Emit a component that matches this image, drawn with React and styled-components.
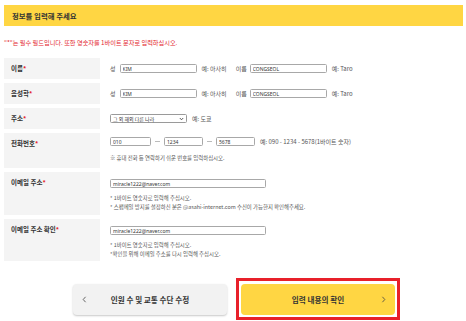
import React from 'react'
import styled, { createGlobalStyle } from 'styled-components'

const GlobalStyle = createGlobalStyle`
    html, body {
        margin: 0;
        padding: 0;
        background: #ffffff;
    }
    body {
        font-family: "Noto Sans CJK KR", "Noto Sans", sans-serif;
        color: #333333;
    }
`

const Container = styled.div`
    width: 466px;
    padding: 5px 3px 0px 4px;
    box-sizing: border-box;
`

const Header = styled.div`
    height: 21px;
    background-color: #ffd643;
    display: flex;
    align-items: center;
    padding-left: 8px;
    font-size: 7.4px;
    font-weight: 700;
    color: #333333;
`

const Notice = styled.p`
    margin: 12px 0px 11px 0px;
    font-size: 6.2px;
    line-height: 9px;
    color: #e3262e;
`

const Row = styled.div`
    display: grid;
    grid-template-columns: 96px 1fr;
    column-gap: 10px;
    min-height: ${props => props.$height}px;
    margin-bottom: 4px;
`

const Label = styled.div`
    background-color: #f4f4f4;
    padding: ${props => props.$multi ? '6px 7px 0px 7px' : '0px 7px'};
    display: flex;
    align-items: ${props => props.$multi ? 'flex-start' : 'center'};
    font-size: 6.5px;
    line-height: 9px;
    font-weight: 700;
    color: #333333;

    span {
        color: #e3262e;
    }
`

const Field = styled.div`
    display: flex;
    flex-direction: column;
    justify-content: ${props => props.$multi ? 'flex-start' : 'center'};
    padding-top: ${props => props.$top || 0}px;
`

const Line = styled.div`
    display: flex;
    align-items: center;
`

const Small = styled.span`
    font-size: 6px;
    color: #555555;
    margin-left: ${props => props.$left || 0}px;
    margin-right: ${props => props.$right || 0}px;
    white-space: nowrap;
`

const Input = styled.input`
    width: ${props => props.$width}px;
    height: 9px;
    box-sizing: border-box;
    border: 1px solid #a8a8a8;
    border-radius: 1.5px;
    padding: 0px 2px;
    margin: 0px;
    font-family: "Noto Sans", "Noto Sans CJK KR", sans-serif;
    font-size: 5px;
    color: #333333;
    background: #ffffff;
    outline: none;
`

const Select = styled.div`
    width: 77px;
    height: 9px;
    box-sizing: border-box;
    border: 1px solid #9a9a9a;
    border-radius: 1.5px;
    padding: 0px 2px;
    display: flex;
    align-items: center;
    justify-content: space-between;
    font-size: 5px;
    color: #333333;
`

const Dash = styled.span`
    width: 5px;
    height: 1px;
    background-color: #bbbbbb;
    margin: 0px 4px;
`

const Hints = styled.div`
    margin-top: ${props => props.$gap}px;
    font-size: 5.4px;
    line-height: 9px;
    color: #555555;
`

const ButtonRow = styled.div`
    display: flex;
    justify-content: center;
    align-items: center;
    gap: 9px;
    margin-top: 17px;
    padding-left: 6px;
`

const BackButton = styled.div`
    position: relative;
    width: 154px;
    height: 31px;
    border-radius: 4px;
    background-color: #f2f2f2;
    box-shadow: 0px 1px 2px rgba(0, 0, 0, 0.22);
    display: flex;
    align-items: center;
    justify-content: center;
    font-size: 7.6px;
    font-weight: 700;
    color: #333333;
`

const Highlight = styled.div`
    border: 3px solid #e8202a;
    padding: 3px 2px 2px 2px;
`

const NextButton = styled.div`
    position: relative;
    width: 154px;
    height: 31px;
    border-radius: 4px;
    background-color: #ffd643;
    display: flex;
    align-items: center;
    justify-content: center;
    font-size: 7.6px;
    font-weight: 700;
    color: #333333;
`

const Arrow = styled.svg`
    position: absolute;
    top: 12px;
    ${props => props.$side}: 9px;
    width: 5px;
    height: 7px;
`

const Chevron = ({ dir }) => (
    <Arrow $side={dir === 'left' ? 'left' : 'right'} viewBox="0 0 5 7">
        <path
            d={dir === 'left' ? 'M3.6 0.8 L1.2 3.5 L3.6 6.2' : 'M1.4 0.8 L3.8 3.5 L1.4 6.2'}
            fill="none"
            stroke="#444"
            strokeWidth="0.8"
        />
    </Arrow>
)

const App = () => {
  return (
    <Container>
        <GlobalStyle />
        <Header>정보를 입력해 주세요</Header>
        <Notice>"*"는 필수 필드입니다. 또한 영숫자를 1바이트 문자로 입력하십시오.</Notice>

        <Row $height={21}>
            <Label>이름<span>*</span></Label>
            <Field>
                <Line>
                    <Small $right={4}>성</Small>
                    <Input $width={77} value="KIM" readOnly />
                    <Small $left={5}>예: 아사히</Small>
                    <Small $left={9} $right={3}>이름</Small>
                    <Input $width={77} value="CONGSEOL" readOnly />
                    <Small $left={5}>예: Taro</Small>
                </Line>
            </Field>
        </Row>

        <Row $height={21}>
            <Label>음성학<span>*</span></Label>
            <Field>
                <Line>
                    <Small $right={4}>성</Small>
                    <Input $width={77} value="KIM" readOnly />
                    <Small $left={5}>예: 아사히</Small>
                    <Small $left={9} $right={3}>이름</Small>
                    <Input $width={77} value="CONGSEOL" readOnly />
                    <Small $left={5}>예: Taro</Small>
                </Line>
            </Field>
        </Row>

        <Row $height={21}>
            <Label>주소<span>*</span></Label>
            <Field>
                <Line>
                    <Select>
                        그 외 해외 다른 나라
                        <svg width="5" height="4" viewBox="0 0 5 4">
                            <path d="M0.8 1 L2.5 2.8 L4.2 1" fill="none" stroke="#333" strokeWidth="0.8" />
                        </svg>
                    </Select>
                    <Small $left={5}>예: 도쿄</Small>
                </Line>
            </Field>
        </Row>

        <Row $height={35}>
            <Label $multi>전화번호<span>*</span></Label>
            <Field $multi $top={4}>
                <Line>
                    <Input $width={41} value="010" readOnly />
                    <Dash />
                    <Input $width={39} value="1234" readOnly />
                    <Dash />
                    <Input $width={39} value="5678" readOnly />
                    <Small $left={5}>예: 090 - 1234 - 5678(1바이트 숫자)</Small>
                </Line>
                <Hints $gap={8}>※ 휴대 전화 등 연락하기 쉬운 번호를 입력하십시오.</Hints>
            </Field>
        </Row>

        <Row $height={43}>
            <Label $multi>이메일 주소<span>*</span></Label>
            <Field $multi $top={7}>
                <Line>
                    <Input $width={156} value="miracle1222@naver.com" readOnly />
                </Line>
                <Hints $gap={6}>
                    * 1바이트 영숫자로 입력해 주십시오.<br />
                    * 스팸메일 방지를 설정하신 분은 @asahi-internet.com 수신이 가능한지 확인해주세요.
                </Hints>
            </Field>
        </Row>

        <Row $height={42}>
            <Label $multi>이메일 주소 확인<span>*</span></Label>
            <Field $multi $top={7}>
                <Line>
                    <Input $width={156} value="miracle1222@naver.com" readOnly />
                </Line>
                <Hints $gap={6}>
                    * 1바이트 영숫자로 입력해 주십시오.<br />
                    *확인을 위해 이메일 주소를 다시 입력해 주십시오.
                </Hints>
            </Field>
        </Row>

        <ButtonRow>
            <BackButton>
                <Chevron dir="left" />
                인원 수 및 교통 수단 수정
            </BackButton>
            <Highlight>
                <NextButton>
                    입력 내용의 확인
                    <Chevron dir="right" />
                </NextButton>
            </Highlight>
        </ButtonRow>
    </Container>
  )
}

export default App
